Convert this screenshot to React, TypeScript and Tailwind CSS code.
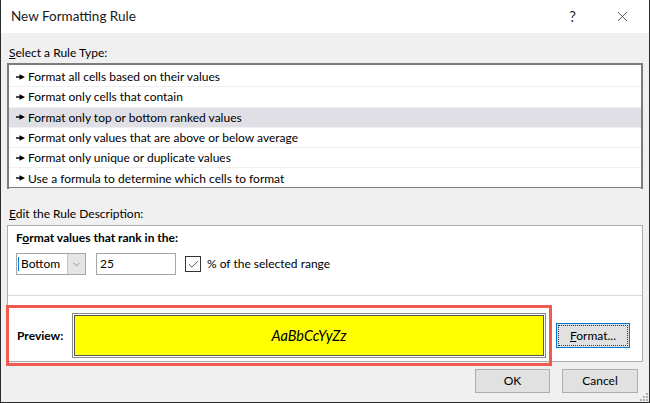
import React from "react";
import { X, ChevronDown, Check } from "lucide-react";

const rules = [
  "Format all cells based on their values",
  "Format only cells that contain",
  "Format only top or bottom ranked values",
  "Format only values that are above or below average",
  "Format only unique or duplicate values",
  "Use a formula to determine which cells to format",
];

const Arrow = () => (
  <svg width="9" height="6" viewBox="0 0 9 6" className="shrink-0">
    <path d="M0 3h5" stroke="#000" strokeWidth="1.4" />
    <path d="M3.5 0.3 L9 3 L3.5 5.7 Z" fill="#000" />
  </svg>
);

const App = () => {
  return (
    <div
      className="relative w-[650px] h-[403px] flex flex-col bg-[#f0f0f0] border-x border-b border-[#2b2b2b] text-[12px] text-black overflow-hidden"
      style={{ fontFamily: 'Lato, "Noto Sans", sans-serif' }}
    >
      {/* title bar */}
      <div className="h-[33px] bg-white flex items-center shrink-0">
        <span className="pl-[10px] text-[13.5px] text-[#1a1a1a]">New Formatting Rule</span>
        <span className="ml-auto text-[15px] text-[#333] mr-[38px]">?</span>
        <X size={17} strokeWidth={1} className="mr-[18px] text-[#222]" />
      </div>

      <div className="flex flex-col pl-[6px] pr-[6px]">
        <div className="h-[30px] pt-[10px] flex items-center pl-[2px]">
          <span>
            <span className="underline">S</span>elect a Rule Type:
          </span>
        </div>

        {/* rule list */}
        <div className="h-[126px] border-2 border-[#7c7c7c] bg-white pt-[2px]">
          {rules.map((r, i) => (
            <div
              key={r}
              className={`h-[20.3px] flex items-center gap-[3px] pl-[7px] border-b border-[#f0f0f0] ${
                i == 2 ? "bg-[#dfdfe5]" : ""
              }`}
            >
              <Arrow />
              <span className="pt-px">{r}</span>
            </div>
          ))}
        </div>

        <div className="h-[36px] pt-[14px] flex items-center pl-[2px]">
          <span>
            <span className="underline">E</span>dit the Rule Description:
          </span>
        </div>

        {/* description panel */}
        <div className="relative h-[137px] border border-[#adadad] bg-white flex flex-col">
          <div className="border-b border-[#d9d9d9] pl-[8px] pt-[4px] h-[70px]">
            <div className="font-bold h-[16px] flex items-center">
              <span>
                F<span className="underline">o</span>rmat values that rank in the:
              </span>
            </div>
            <div className="mt-[7px] flex items-center h-[22px]">
              <div className="w-[70px] h-[22px] border border-[#a6a6a6] flex items-center">
                <span className="ml-[1px] w-px h-[14px] bg-[#0078d7]" />
                <span className="ml-[2px] flex-1">Bottom</span>
                <div className="w-[18px] h-[20px] bg-[#e5e5e5] border-l border-[#c4c4c4] flex items-center justify-center">
                  <ChevronDown size={11} strokeWidth={1.2} className="text-[#555]" />
                </div>
              </div>
              <div className="ml-[10px] w-[80px] h-[22px] border border-[#a6a6a6] flex items-center pl-[3px]">
                25
              </div>
              <div className="ml-[9px] w-[16px] h-[16px] border border-[#333] flex items-center justify-center">
                <Check size={13} strokeWidth={1.4} className="text-[#222]" />
              </div>
              <span className="ml-[6px]">
                % of the selected ran<span className="underline">g</span>e
              </span>
            </div>
          </div>

          <div className="flex items-center pt-[17px] pl-[9px]">
            <span className="font-bold w-[55px]">Preview:</span>
            <div className="w-[474px] h-[45px] border border-[#8a8a8a] p-px">
              <div className="w-full h-full border border-[#555] bg-[#ffff00] flex items-center justify-center italic text-[14.5px]">
                AaBbCcYyZz
              </div>
            </div>
            <div className="ml-[10px] w-[74px] h-[25px] border border-[#0078d7] bg-[#e1e1e1] p-px">
              <div className="w-full h-full border border-dotted border-[#333] flex items-center justify-center">
                <span>
                  <span className="underline">F</span>ormat...
                </span>
              </div>
            </div>
          </div>
        </div>

        {/* buttons */}
        <div className="flex justify-end gap-[12px] mt-[7px] mr-[5px]">
          <div className="w-[75px] h-[24px] border border-[#adadad] bg-[#e1e1e1] flex items-center justify-center">
            OK
          </div>
          <div className="w-[76px] h-[24px] border border-[#adadad] bg-[#e1e1e1] flex items-center justify-center">
            Cancel
          </div>
        </div>
      </div>

      {/* annotation highlight */}
      <div className="absolute left-[5px] top-[305px] w-[546px] h-[61px] border-[3px] border-[#f15a4f]" />

      {/* resize grip */}
      <div className="absolute right-[1px] bottom-[1px] grid grid-cols-3 gap-[1px]">
        <span className="w-[2px] h-[2px]" />
        <span className="w-[2px] h-[2px]" />
        <span className="w-[2px] h-[2px] bg-[#b0b0b0]" />
        <span className="w-[2px] h-[2px]" />
        <span className="w-[2px] h-[2px] bg-[#b0b0b0]" />
        <span className="w-[2px] h-[2px] bg-[#b0b0b0]" />
        <span className="w-[2px] h-[2px] bg-[#b0b0b0]" />
        <span className="w-[2px] h-[2px] bg-[#b0b0b0]" />
        <span className="w-[2px] h-[2px] bg-[#b0b0b0]" />
      </div>
    </div>
  );
};

export default App;
